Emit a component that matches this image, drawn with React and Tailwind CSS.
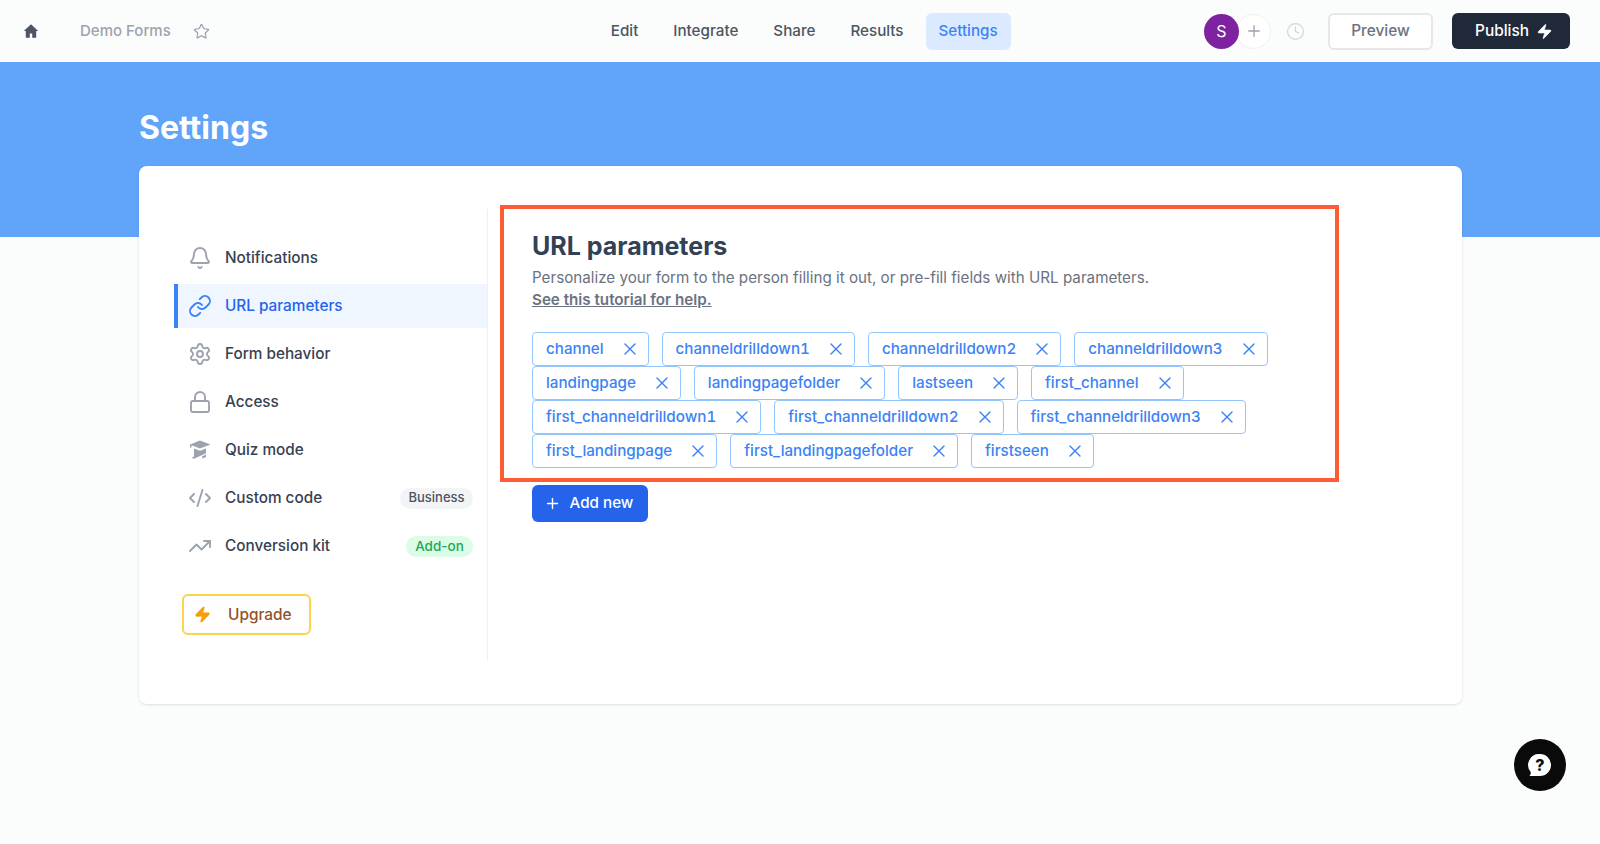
import React from "react";
import { Bell, Link, Settings, Lock, CodeXml, TrendingUp, Star, Plus, Clock, Zap, X } from "lucide-react";

const rows = [
  ["channel", "channeldrilldown1", "channeldrilldown2", "channeldrilldown3"],
  ["landingpage", "landingpagefolder", "lastseen", "first_channel"],
  ["first_channeldrilldown1", "first_channeldrilldown2", "first_channeldrilldown3"],
  ["first_landingpage", "first_landingpagefolder", "firstseen"],
];

function QuizIcon({ size, className }) {
  return (
    <svg width={size} height={size} viewBox="0 0 24 24" className={className} fill="currentColor">
      <path d="M12 2.500 22.500 6.500 12 10.500 3.500 7.300V9.500H2V6.500z" />
      <path d="M6 10.500 12 12.800l6-2.300v3.700c0 .8-.4 1.300-1 1.600L6.500 20.500 5.500 21 4 19.500l2-1.200z" />
      <path d="M14 18.500l4-2v2.500l-3.500 1.500z" />
    </svg>
  );
}

function Tag({ label }) {
  return (
    <div className="flex h-[34px] items-center gap-[16px] rounded border border-[#93c5fd] bg-white pl-[13px] pr-[8px] text-[15.2px] font-medium tabular-nums text-[#3b82f6]">
      <span>{label}</span>
      <X size={20} strokeWidth={1.6} className="text-[#3b82f6]" />
    </div>
  );
}

function NavItem({ icon: Icon, label, active, badge }) {
  return (
    <div className={`flex h-11 items-center border-l-4 pl-[10px] pr-[14px] ${active ? "border-[#3b82f6] bg-[#eff6ff] text-[#2563eb]" : "border-transparent text-[#374151]"}`}>
      <Icon size={24} strokeWidth={1.9} className={active ? "text-[#3b82f6]" : "text-[#9ca3af]"} />
      <span className="ml-[13px] flex-1 text-[15.3px] font-medium">{label}</span>
      {badge}
    </div>
  );
}

function HelpIcon() {
  return (
    <svg width="28" height="28" viewBox="0 0 28 28">
      <path d="M14 3a11 11 0 0 1 0 22h-10.500c1-1.200 1.500-2.500 1.200-4A11 11 0 0 1 14 3z" fill="#fff" />
      <text x="14" y="20" textAnchor="middle" fontSize="16" fontWeight="800" fill="#111" fontFamily="Inter, sans-serif">?</text>
    </svg>
  );
}

export default function App() {
  return (
    <div className="relative min-h-screen bg-[#fbfcfc] font-['Inter',sans-serif]">
      <header className="flex h-[62px] items-center pl-[23px] pr-[30px]">
        <svg width="16" height="16" viewBox="0 0 20 20" fill="#4b5563">
          <path d="M10 1.500 1 10h2.500v8.500h5V13h3v5.500h5V10H19z" />
        </svg>
        <span className="ml-[41px] text-[15px] font-medium text-[#9ca3af]">Demo Forms</span>
        <Star size={17} strokeWidth={1.75} className="ml-[22px] text-[#9ca3af]" />
        <nav className="ml-[392px] flex items-center text-[15.2px] font-medium text-[#4b5563]">
          <span className="px-[9px]">Edit</span>
          <span className="ml-[17px] px-[9px]">Integrate</span>
          <span className="ml-[17px] px-[9px]">Share</span>
          <span className="ml-[17px] px-[9px]">Results</span>
          <span className="ml-[13px] flex h-[37px] w-[85px] items-center justify-center rounded-md bg-[#dbeafe] text-[#3b82f6]">Settings</span>
        </nav>
        <div className="ml-auto flex items-center">
          <div className="z-10 flex h-[35px] w-[35px] items-center justify-center rounded-full bg-[#7e22a0] text-base text-white">S</div>
          <div className="-ml-[3px] flex h-[35px] w-[35px] items-center justify-center rounded-full border border-[#f0f1f3] bg-white">
            <Plus size={18} strokeWidth={1.75} className="text-[#9ca3af]" />
          </div>
          <Clock size={19} strokeWidth={1.5} className="ml-[15px] text-[#d1d5db]" />
          <div className="ml-[23px] flex h-[37px] w-[105px] items-center justify-center rounded-md border-2 border-[#e5e7eb] bg-white text-[15.4px] font-medium text-[#6b7280]">Preview</div>
          <div className="ml-[19px] flex h-[36px] w-[118px] items-center justify-center gap-[7px] rounded-md bg-[#1f2937] pl-[6px] text-[15.4px] font-medium text-white">
            Publish
            <Zap size={17} fill="#fff" strokeWidth={1} />
          </div>
        </div>
      </header>

      <section className="h-[175px] bg-[#60a5fa] pl-[139px] pt-[46px]">
        <h1 className="text-[32px] font-bold leading-[40px] text-white">Settings</h1>
      </section>

      <div className="-mt-[71px] ml-[139px] mr-[138px] flex h-[538px] rounded-lg bg-white py-[43px] pl-[35px] shadow-[0_1px_3px_rgba(0,0,0,0.12)]">
        <aside className="flex w-[314px] flex-col gap-1 border-r border-[#eef0f2] pt-[27px]">
          <NavItem icon={Bell} label="Notifications" />
          <NavItem icon={Link} label="URL parameters" active />
          <NavItem icon={Settings} label="Form behavior" />
          <NavItem icon={Lock} label="Access" />
          <NavItem icon={QuizIcon} label="Quiz mode" />
          <NavItem
            icon={CodeXml}
            label="Custom code"
            badge={<span className="flex h-[21px] w-[73px] items-center justify-center rounded-full bg-[#f3f4f6] text-[13px] font-medium text-[#4b5563]">Business</span>}
          />
          <NavItem
            icon={TrendingUp}
            label="Conversion kit"
            badge={<span className="flex h-[21px] w-[67px] items-center justify-center rounded-full bg-[#dcfce7] text-[13.5px] font-medium text-[#22a855]">Add-on</span>}
          />
          <div className="ml-2 mt-[22px] flex h-[41px] w-[129px] items-center rounded-md border-2 border-[#fcd34d] bg-white pl-[10px] text-[15.4px] font-medium text-[#92522a]">
            <Zap size={17} fill="#f59e0b" className="text-[#f59e0b]" />
            <span className="ml-[17px]">Upgrade</span>
          </div>
        </aside>

        <main className="-mt-1 ml-3">
          <div className="w-[839px] border-4 border-[#ff5c35] pb-[10px] pl-[28px] pt-[21px]">
            <h2 className="text-[25px] font-bold leading-8 text-[#334155]">URL parameters</h2>
            <p className="mt-[5px] text-[15.2px] leading-[21px] text-[#6b7280]">Personalize your form to the person filling it out, or pre-fill fields with URL parameters.</p>
            <a className="mt-px block text-[15.2px] font-semibold leading-[21px] text-[#6b7280] underline">See this tutorial for help.</a>
            <div className="mt-[22px] flex flex-col">
              {rows.map((row, i) => (
                <div key={i} className="flex gap-[13px]">
                  {row.map((t) => (
                    <Tag key={t} label={t} />
                  ))}
                </div>
              ))}
            </div>
          </div>
          <button className="ml-[32px] mt-[3px] flex h-[37px] w-[116px] items-center justify-center gap-[9px] rounded-md bg-[#2563eb] pr-[3px] text-[15.2px] font-medium text-white">
            <Plus size={17} strokeWidth={2} />
            Add new
          </button>
        </main>
      </div>

      <div className="absolute left-[1514px] top-[739px] flex h-[52px] w-[52px] items-center justify-center rounded-full bg-[#0a0a0a]">
        <HelpIcon />
      </div>
    </div>
  );
}
